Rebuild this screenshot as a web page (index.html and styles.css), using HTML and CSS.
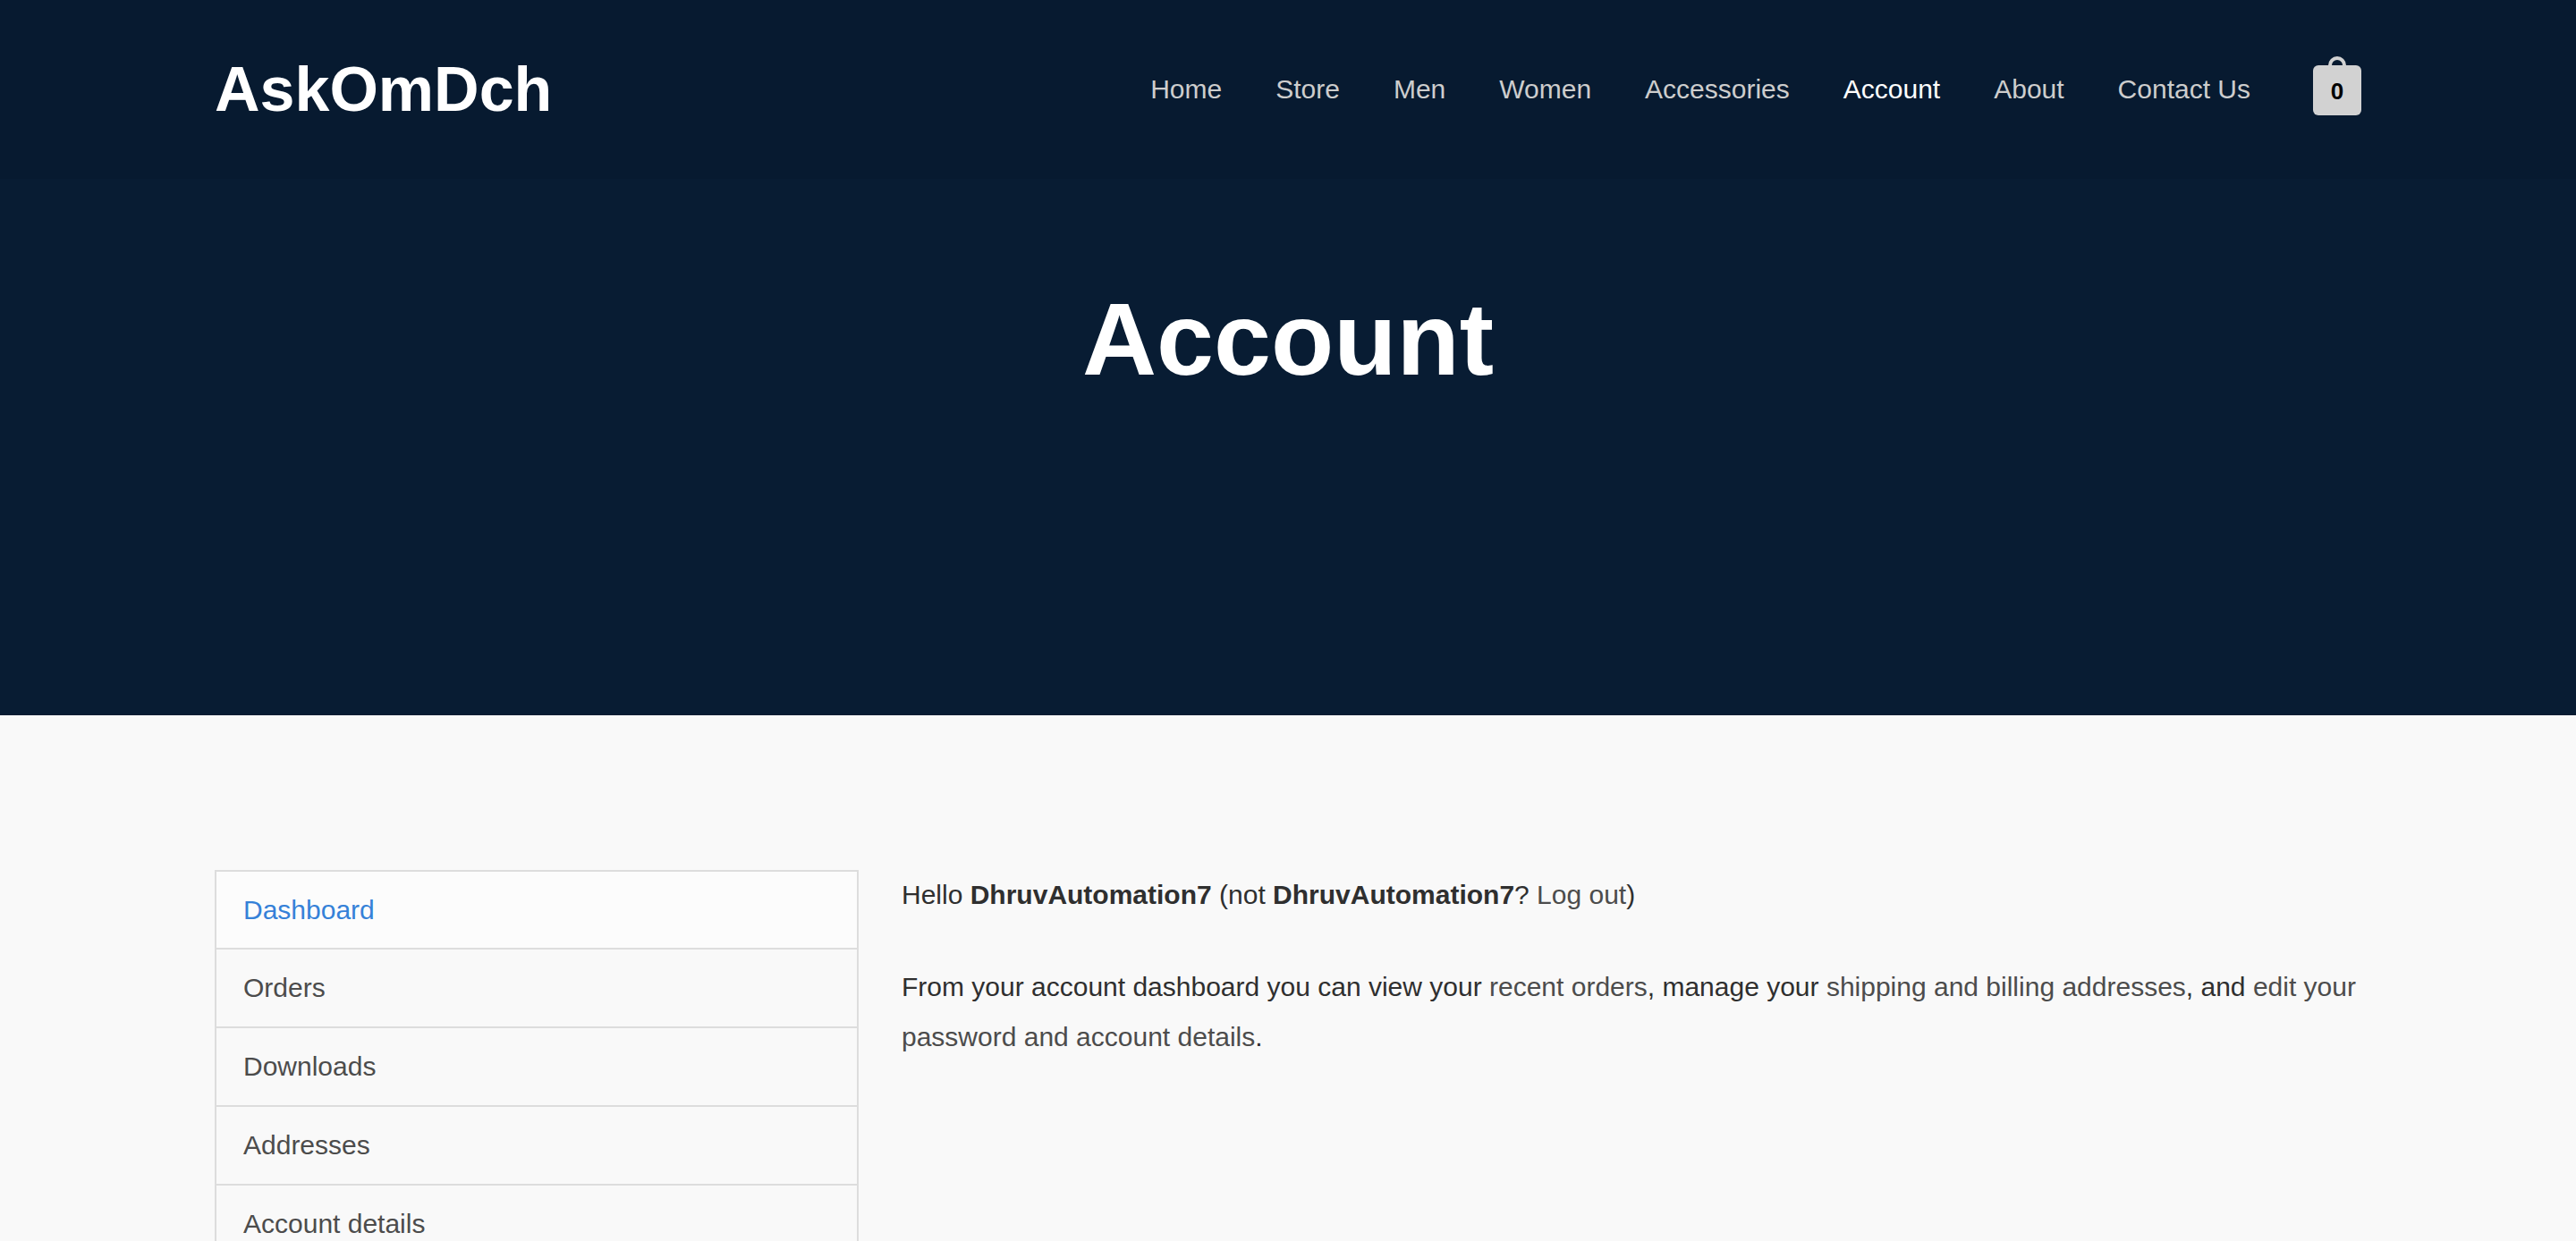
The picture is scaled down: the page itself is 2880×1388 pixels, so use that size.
FILE: index.html
```html
<!DOCTYPE html>
<html lang="en">
<head>
<meta charset="utf-8">
<title>Account – AskOmDch</title>
<link rel="stylesheet" href="styles.css">
</head>
<body>
<div class="masthead">
  <header class="site-header">
    <div class="container header-row">
      <a class="brand" href="#">AskOmDch</a>
      <nav class="main-nav" aria-label="Site">
        <a href="#">Home</a>
        <a href="#">Store</a>
        <a href="#">Men</a>
        <a href="#">Women</a>
        <a href="#">Accessories</a>
        <a class="current" href="#">Account</a>
        <a href="#">About</a>
        <a href="#">Contact Us</a>
      </nav>
      <a class="cart" href="#">0</a>
    </div>
  </header>
  <h1 class="page-title">Account</h1>
</div>
<main class="container account">
  <nav class="account-nav" aria-label="Account pages">
    <ul>
      <li><a class="current" href="#">Dashboard</a></li>
      <li><a href="#">Orders</a></li>
      <li><a href="#">Downloads</a></li>
      <li><a href="#">Addresses</a></li>
      <li><a href="#">Account details</a></li>
    </ul>
  </nav>
  <section class="account-content">
    <p>Hello <strong>DhruvAutomation7</strong> (not <strong>DhruvAutomation7</strong>? <a href="#">Log out</a>)</p>
    <p>From your account dashboard you can view your <a href="#">recent orders</a>, manage your <a href="#">shipping and billing addresses</a>, and <a href="#">edit your password and account details</a>.</p>
  </section>
</main>
</body>
</html>
```
FILE: styles.css
```css
* { box-sizing: border-box; }
html { scrollbar-width: none; }
body {
  margin: 0;
  background: #f9f9f9;
  color: #2f2f2f;
  font: 30px/56px "Liberation Sans", Arial, sans-serif;
}
a { color: #4c4c4c; text-decoration: none; }
.container { width: 100%; max-width: 2480px; margin: 0 auto; padding: 0 40px; }
.masthead { background: #081c33; padding-bottom: 352px; }
.site-header { background: #071a30; }
.header-row { display: flex; align-items: center; min-height: 200px; }
.brand { color: #fff; font-size: 70px; font-weight: 700; line-height: 80px; }
.main-nav { display: flex; gap: 60px; margin-left: auto; }
.main-nav a { color: #cdcdcd; }
.main-nav .current { color: #fff; }
.cart {
  position: relative;
  width: 54px;
  height: 56px;
  margin-top: 2px;
  margin-left: 70px;
  border-radius: 6px;
  background: #d2d2d2;
  color: #000;
  font-size: 26px;
  font-weight: 700;
  line-height: 58px;
  text-align: center;
}
.cart::before {
  content: "";
  box-sizing: border-box;
  position: absolute;
  left: 17px;
  bottom: 100%;
  width: 20px;
  height: 10px;
  border: 4px solid #d2d2d2;
  border-bottom: 0;
  border-radius: 10px 10px 0 0;
}
.page-title {
  margin: 0;
  padding-top: 110px;
  color: #fff;
  font-size: 115px;
  line-height: 138px;
  text-align: center;
}
.account { display: grid; grid-template-columns: 30% 68%; justify-content: space-between; padding-top: 173px; }
.account-nav ul { margin: 0; padding: 0; list-style: none; border: 2px solid #ddd; border-bottom: 0; }
.account-nav a { display: block; padding: 15px 30px 14px; border-bottom: 2px solid #ddd; }
.account-nav li:nth-child(n+2) a { padding-bottom: 15px; }
.account-nav .current { color: #3581d8; background: #fcfcfc; }
.account-content p { margin: 0 0 47px; }
```
